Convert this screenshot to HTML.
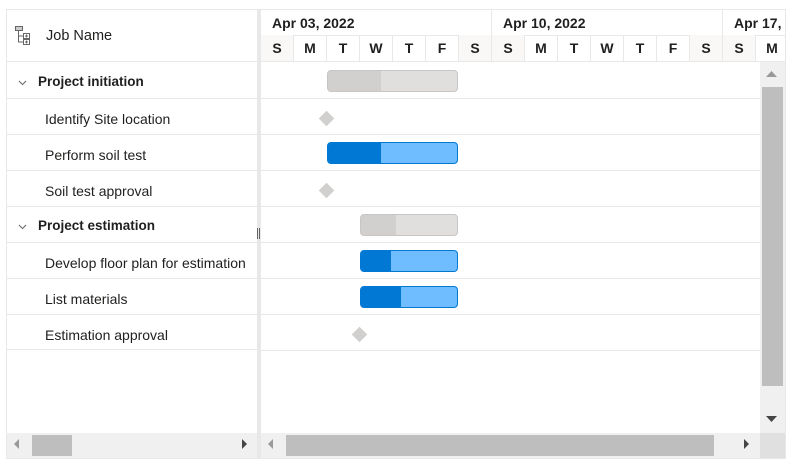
<!DOCTYPE html>
<html><head><style>
*{margin:0;padding:0;box-sizing:border-box}
body{width:792px;height:466px;background:#fff;font-family:"Segoe UI","Liberation Sans",sans-serif;color:#201f1e;position:relative;overflow:hidden}
.a{position:absolute}
.hl{position:absolute;height:1px;background:#e8e8e8}
.vl{position:absolute;width:1px;background:#e8e8e8}
.t{position:absolute;font-size:14px;white-space:nowrap;line-height:18px}
.b{font-weight:bold;font-size:13.5px}
.d{position:absolute;top:35px;height:26px;width:33px;text-align:center;font-weight:bold;font-size:14px;line-height:26px;border-right:1px solid #e8e8e8}
.we{background:#f9f8f7}
.dm{position:absolute;width:11px;height:11px;background:#d2d0ce;transform:rotate(45deg)}
.bar{position:absolute;height:22px;border-radius:4px;overflow:hidden}
</style></head><body>
<div class="a" style="left:6px;top:9px;width:780px;height:450px;border:1px solid #e8e8e8"></div>
<div class="a" style="left:257px;top:10px;width:4px;height:448px;background:#e8e8e8"></div>
<div class="a" style="left:257px;top:228px;width:1px;height:11px;background:#666"></div>
<div class="a" style="left:259px;top:228px;width:1px;height:11px;background:#666"></div>
<svg class="a" style="left:14px;top:26px" width="22" height="20" viewBox="0 0 22 20" fill="none" stroke="#666" stroke-width="1">
<rect x="1.5" y="0.5" width="7" height="4" fill="#ccc"/><path d="M4.5 5v11h5M4.5 10h5"/>
<rect x="9.5" y="7.5" width="6" height="5"/><rect x="9.5" y="13.5" width="6" height="5"/>
<path d="M12.5 8.5v3M11 10h3M11 16h3M12.5 14.5v3"/></svg>
<div class="t" style="left:46px;top:27px;font-size:14.5px">Job Name</div>
<div class="hl" style="left:7px;top:61px;width:250px"></div>
<svg class="a" style="left:18px;top:80px" width="9" height="6"><path d="M1 1l3.5 3.5L8 1" stroke="#666" fill="none"/></svg>
<div class="t b" style="left:38px;top:73px">Project initiation</div>
<div class="hl" style="left:7px;top:98px;width:250px"></div>
<div class="t" style="left:45px;top:110px">Identify Site location</div>
<div class="hl" style="left:7px;top:134px;width:250px"></div>
<div class="t" style="left:45px;top:146px">Perform soil test</div>
<div class="hl" style="left:7px;top:170px;width:250px"></div>
<div class="t" style="left:45px;top:182px">Soil test approval</div>
<div class="hl" style="left:7px;top:206px;width:250px"></div>
<svg class="a" style="left:18px;top:224px" width="9" height="6"><path d="M1 1l3.5 3.5L8 1" stroke="#666" fill="none"/></svg>
<div class="t b" style="left:38px;top:217px">Project estimation</div>
<div class="hl" style="left:7px;top:242px;width:250px"></div>
<div class="t" style="left:45px;top:254px;font-size:14px">Develop floor plan for estimation</div>
<div class="hl" style="left:7px;top:278px;width:250px"></div>
<div class="t" style="left:45px;top:290px">List materials</div>
<div class="hl" style="left:7px;top:314px;width:250px"></div>
<div class="t" style="left:45px;top:326px">Estimation approval</div>
<div class="hl" style="left:7px;top:349px;width:250px"></div>
<div class="a" style="left:7px;top:433px;width:250px;height:25px;background:#f0f0f0"></div>
<div class="a" style="left:32px;top:435px;width:40px;height:21px;background:#bebebe"></div>
<svg class="a" style="left:14px;top:439px" width="6" height="10"><path d="M5 0v10L0 5z" fill="#999"/></svg>
<svg class="a" style="left:242px;top:439px" width="6" height="10"><path d="M0 0v10l5-5z" fill="#444"/></svg>
<div class="a" style="left:261px;top:10px;width:524px;height:51px;overflow:hidden">
 <div class="a" style="left:0;top:0;width:600px;height:51px">
  <div class="t b" style="left:11px;top:4px;font-size:14px">Apr 03, 2022</div>
  <div class="vl" style="left:230px;top:0;height:25px"></div>
  <div class="t b" style="left:242px;top:4px;font-size:14px">Apr 10, 2022</div>
  <div class="vl" style="left:461px;top:0;height:25px"></div>
  <div class="t b" style="left:473px;top:4px;font-size:14px">Apr 17, 2022</div>
  <div class="hl" style="left:0;top:25px;width:600px"></div>
  <div class="hl" style="left:0;top:51px;width:600px"></div>
 </div>
 <div class="a" style="left:0;top:-10px;width:600px;height:61px">
  <div class="d we" style="left:0">S</div><div class="d" style="left:33px">M</div><div class="d" style="left:66px">T</div><div class="d" style="left:99px">W</div><div class="d" style="left:132px">T</div><div class="d" style="left:165px">F</div><div class="d we" style="left:198px">S</div>
  <div class="d we" style="left:231px">S</div><div class="d" style="left:264px">M</div><div class="d" style="left:297px">T</div><div class="d" style="left:330px">W</div><div class="d" style="left:363px">T</div><div class="d" style="left:396px">F</div><div class="d we" style="left:429px">S</div>
  <div class="d we" style="left:462px">S</div><div class="d" style="left:495px">M</div>
 </div>
</div>
<div class="hl" style="left:261px;top:61px;width:524px"></div>
<div class="hl" style="left:261px;top:98px;width:499px"></div>
<div class="hl" style="left:261px;top:134px;width:499px"></div>
<div class="hl" style="left:261px;top:170px;width:499px"></div>
<div class="hl" style="left:261px;top:206px;width:499px"></div>
<div class="hl" style="left:261px;top:242px;width:499px"></div>
<div class="hl" style="left:261px;top:278px;width:499px"></div>
<div class="hl" style="left:261px;top:314px;width:499px"></div>
<div class="hl" style="left:261px;top:350px;width:499px"></div>
<div class="bar" style="left:327px;top:70px;width:131px;background:#e1dfdd;border:1px solid #c8c6c4"><div style="width:53px;height:100%;background:#d2d0ce"></div></div>
<div class="dm" style="left:321px;top:113px"></div>
<div class="bar" style="left:327px;top:142px;width:131px;background:#6fbdff;border:1px solid #0078d4"><div style="width:53px;height:100%;background:#0078d4"></div></div>
<div class="dm" style="left:321px;top:185px"></div>
<div class="bar" style="left:360px;top:214px;width:98px;background:#e1dfdd;border:1px solid #c8c6c4"><div style="width:35px;height:100%;background:#d2d0ce"></div></div>
<div class="bar" style="left:360px;top:250px;width:98px;background:#6fbdff;border:1px solid #0078d4"><div style="width:30px;height:100%;background:#0078d4"></div></div>
<div class="bar" style="left:360px;top:286px;width:98px;background:#6fbdff;border:1px solid #0078d4"><div style="width:40px;height:100%;background:#0078d4"></div></div>
<div class="dm" style="left:354px;top:329px"></div>
<div class="a" style="left:760px;top:62px;width:25px;height:371px;background:#f0f0f0"></div>
<div class="a" style="left:762px;top:87px;width:21px;height:299px;background:#bebebe"></div>
<svg class="a" style="left:766px;top:71px" width="12" height="7"><path d="M0 6h11L5.5 0z" fill="#999"/></svg>
<svg class="a" style="left:766px;top:416px" width="12" height="7"><path d="M0 0h11L5.5 6z" fill="#444"/></svg>
<div class="a" style="left:261px;top:433px;width:499px;height:25px;background:#f0f0f0"></div>
<div class="a" style="left:760px;top:433px;width:25px;height:25px;background:#e0e0e0"></div>
<div class="a" style="left:286px;top:435px;width:428px;height:21px;background:#bebebe"></div>
<svg class="a" style="left:268px;top:439px" width="6" height="10"><path d="M5 0v10L0 5z" fill="#999"/></svg>
<svg class="a" style="left:744px;top:439px" width="6" height="10"><path d="M0 0v10l5-5z" fill="#444"/></svg>
</body></html>
